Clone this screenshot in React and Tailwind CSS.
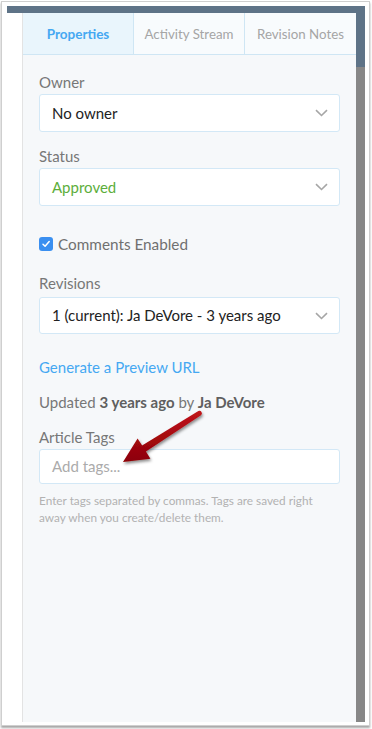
import React from "react";

function Chevron() {
  return (
    <svg width="13" height="8" viewBox="0 0 13 8" className="shrink-0">
      <path d="M1 1.2 L6.5 6.5 L12 1.2" fill="none" stroke="#a6a6a6" strokeWidth="1.6" />
    </svg>
  );
}

function Select({ children, color = "text-[#222]", h = "h-[38px]" }) {
  return (
    <div className={`${h} bg-white border border-[#d3e8f6] rounded-[3px] flex items-center justify-between pl-[12px] pr-[11px]`}>
      <span className={`text-[15px] ${color}`}>{children}</span>
      <Chevron />
    </div>
  );
}

export default function App() {
  return (
    <div
      className="relative w-[372px] h-[729px] bg-white pt-[1px] pl-[1px] pr-[2px] pb-[3px]"
      style={{ fontFamily: "Lato, 'Open Sans', sans-serif" }}
    >
      <div className="w-full h-full border border-[#cfcfcf] shadow-[0_2px_2px_rgba(0,0,0,0.35)] bg-white pt-[4px] pl-[5px] pr-[3px] pb-[3px] flex">
        {/* left white column */}
        <div className="w-[15px] flex flex-col">
          <div className="h-[7px] bg-[#5e7387]" />
          <div className="flex-1 bg-white" />
        </div>
        {/* main panel */}
        <div className="w-[334px] flex flex-col">
          <div className="h-[7px] bg-[#5e7387]" />
          <div className="flex-1 flex flex-col border-l border-[#e3e3e3] bg-[#f6f8fa]">
            <div className="h-[42px] flex border-b border-[#cfe6f4]">
              <div className="w-[111px] pt-[2px] bg-[#e9f5fc] border-r border-[#cfe6f4] flex items-center justify-center text-[13.5px] font-bold text-[#45a8f2]">
                Properties
              </div>
              <div className="w-[111px] pt-[2px] bg-[#f8fbfd] border-r border-[#cfe6f4] flex items-center justify-center text-[13.3px] text-[#a5a5a5]">
                Activity Stream
              </div>
              <div className="flex-1 pt-[2px] bg-[#f8fbfd] flex items-center justify-center text-[13.3px] text-[#a5a5a5]">
                Revision Notes
              </div>
            </div>
            <div className="pl-[16px] pr-[16px] pt-[17px] flex flex-col">
              <div className="text-[15px] leading-[20px] text-[#777] mb-[2px]">Owner</div>
              <Select>No owner</Select>
              <div className="text-[15px] leading-[20px] text-[#777] mt-[14px] mb-[2px]">Status</div>
              <Select color="text-[#5cae3b]">Approved</Select>
              <div className="mt-[28px] h-[20px] flex items-center gap-[5px]">
                <div className="w-[14px] h-[14px] rounded-[3px] bg-[#3a8ff0] flex items-center justify-center">
                  <svg width="10" height="10" viewBox="0 0 10 10">
                    <path d="M2 5.2 L4.1 7.3 L8.2 2.6" fill="none" stroke="white" strokeWidth="1.5" strokeLinecap="round" strokeLinejoin="round" />
                  </svg>
                </div>
                <span className="text-[15.3px] text-[#707070]">Comments Enabled</span>
              </div>
              <div className="text-[15px] leading-[20px] text-[#777] mt-[19px] mb-[4px]">Revisions</div>
              <Select h="h-[37px]">1 (current): Ja DeVore - 3 years ago</Select>
              <div className="text-[15px] leading-[20px] text-[#45a8f2] mt-[23px]">Generate a Preview URL</div>
              <div className="text-[15px] leading-[20px] text-[#777] mt-[15px]">
                Updated <span className="font-bold text-[#5f5f5f]">3 years ago</span> by{" "}
                <span className="font-bold text-[#5f5f5f]">Ja DeVore</span>
              </div>
              <div className="text-[15px] leading-[20px] text-[#777] mt-[15px] mb-[2px]">Article Tags</div>
              <div className="h-[35px] bg-white border border-[#d3e8f6] rounded-[3px] flex items-center pl-[12px] text-[15px] text-[#ababab]">
                Add tags...
              </div>
              <div className="mt-[8px] text-[11.8px] leading-[17px] text-[#b2b2b2] whitespace-nowrap">
                Enter tags separated by commas. Tags are saved right
                <br />
                away when you create/delete them.
              </div>
            </div>
          </div>
        </div>
        {/* right strip */}
        <div className="w-[9px] flex flex-col">
          <div className="h-[61px] bg-[#5e7387]" />
          <div className="flex-1 bg-[#878787]" />
        </div>
      </div>
      {/* annotation arrow */}
      <svg className="absolute left-0 top-0 pointer-events-none" width="372" height="729" viewBox="0 0 372 729">
        <defs>
          <linearGradient id="ag" x1="0" y1="0" x2="0" y2="1">
            <stop offset="0" stopColor="#c0141a" />
            <stop offset="1" stopColor="#8c0006" />
          </linearGradient>
          <filter id="sh" x="-20%" y="-20%" width="150%" height="150%">
            <feDropShadow dx="1" dy="2" stdDeviation="1.5" floodColor="#000" floodOpacity="0.45" />
          </filter>
        </defs>
        <path
          d="M 123 462 L 137.6 438.5 L 142.1 445.6 L 198.4 411 A 2.5 2.5 0 0 1 201 415.2 L 145.9 451.5 L 150.4 458.7 Z"
          fill="url(#ag)"
          filter="url(#sh)"
        />
      </svg>
    </div>
  );
}
